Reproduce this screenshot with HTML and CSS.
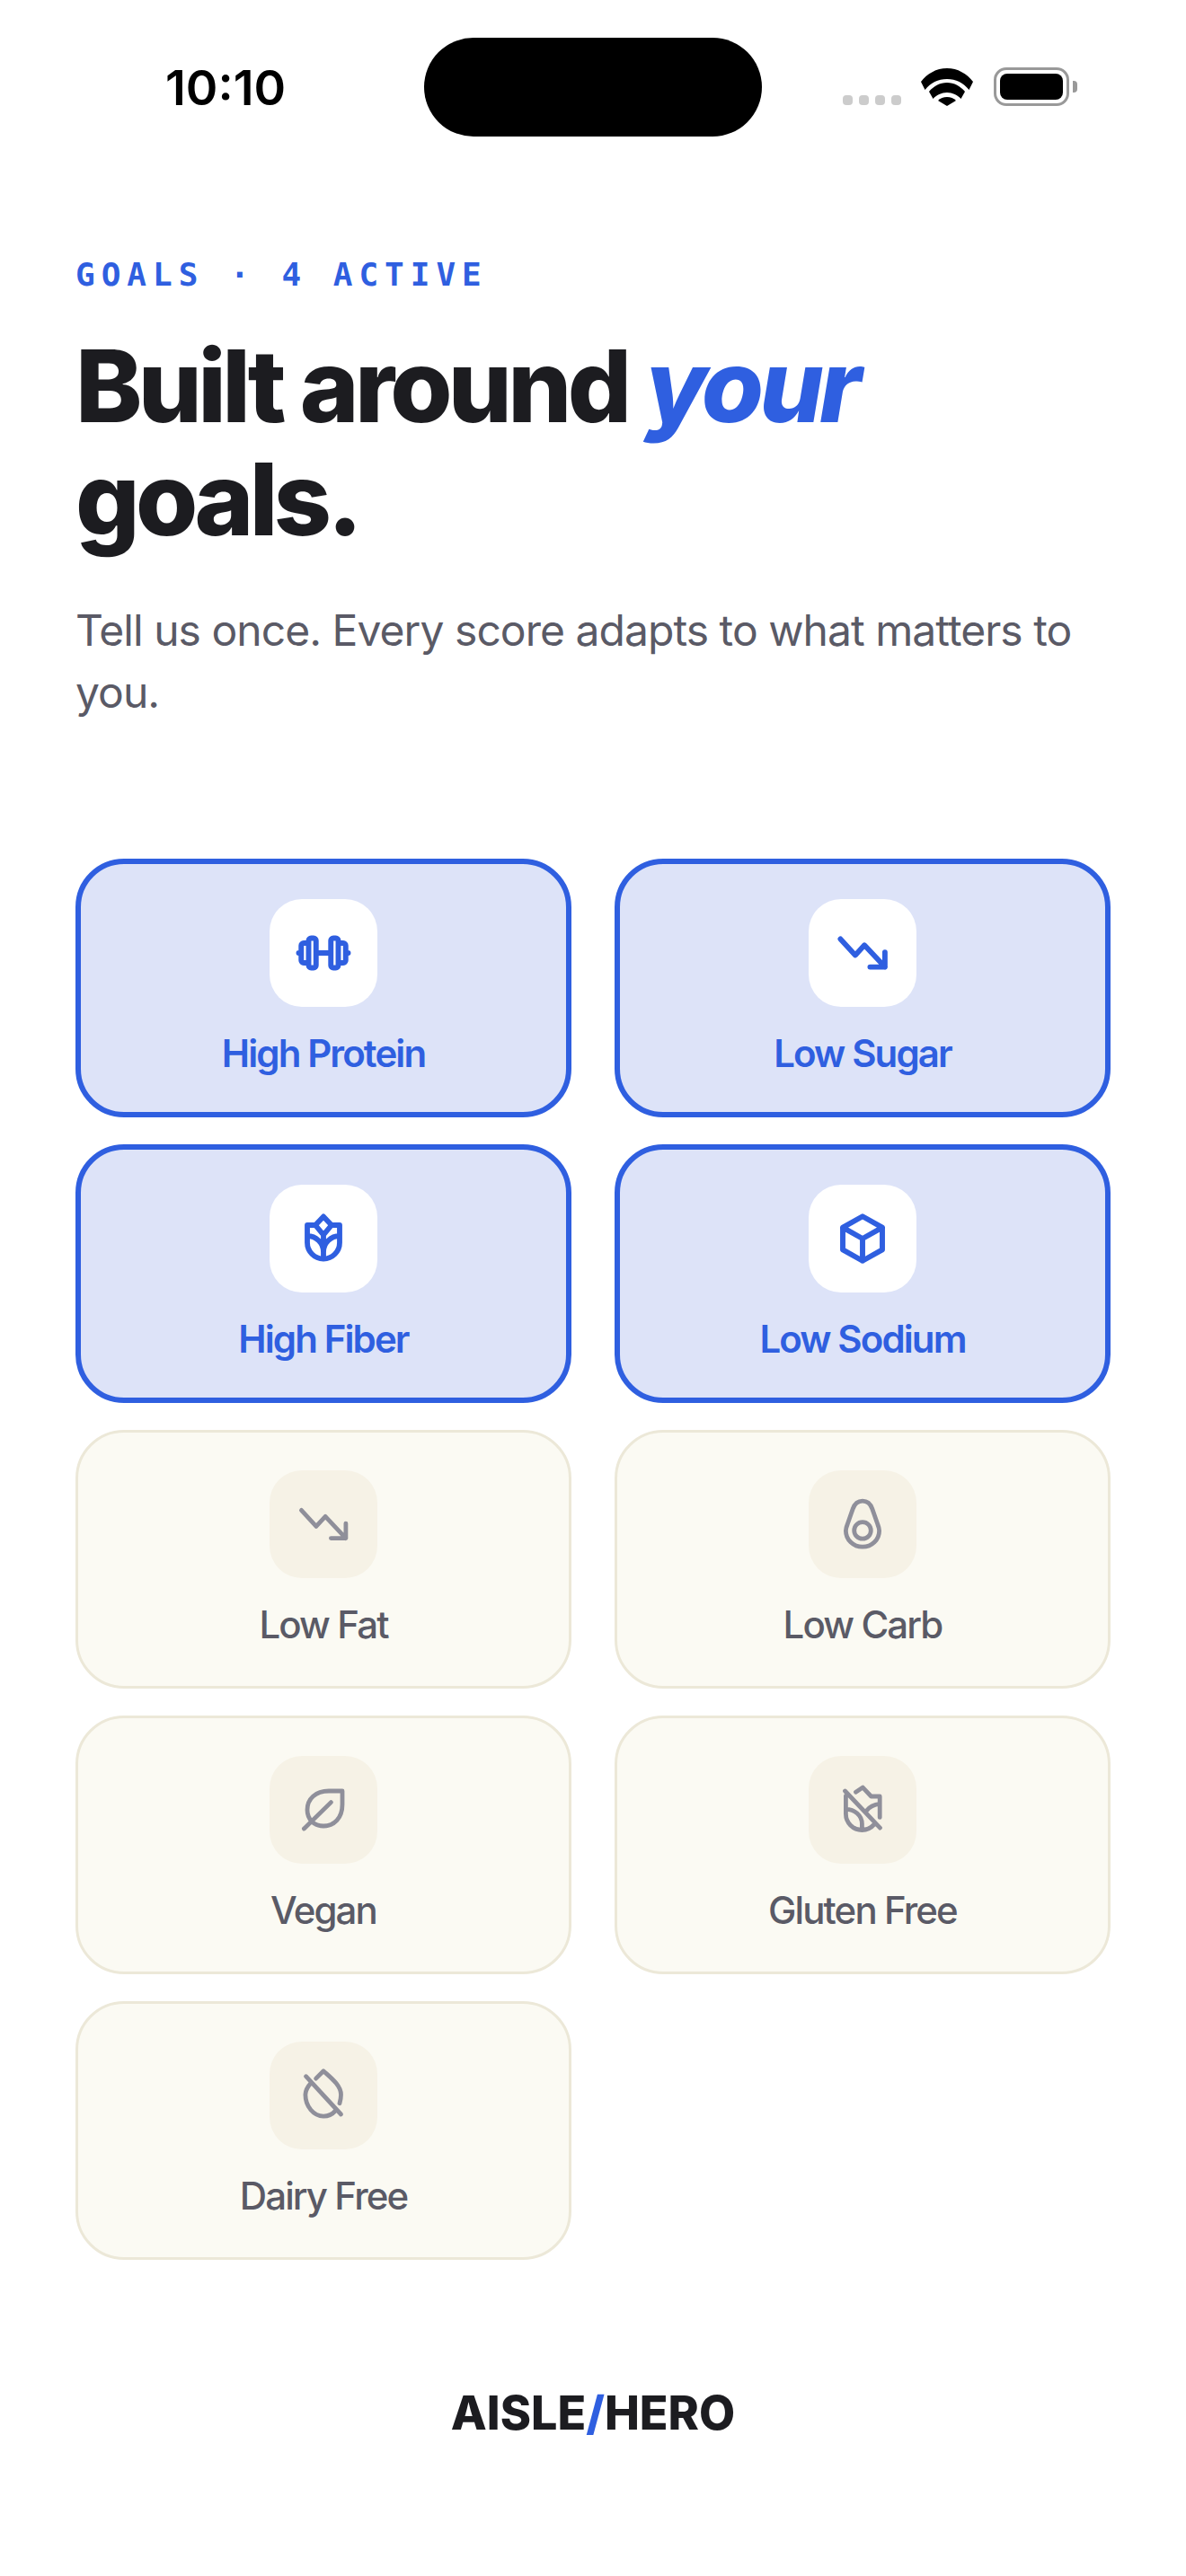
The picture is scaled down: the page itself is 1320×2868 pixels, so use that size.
FILE: index.html
```html
<!DOCTYPE html>
<html lang="en">
<head>
    <meta charset="UTF-8">
    <meta name="viewport" content="width=device-width, initial-scale=1.0">
    <title>Goals</title>
    <link rel="stylesheet" href="styles.css">
</head>
<body>
    <div class="status-bar">
        <span class="clock">10:10</span>
        <div class="island"></div>
        <div class="status-icons">
            <div class="signal"><i></i><i></i><i></i><i></i></div>
            <svg class="wifi" width="58" height="42" viewBox="0 0 58 42">
                <path d="M0 15C7 6 17 0 29 0s22 6 29 15l-4.500 9C47 16 39 12 29 12S11 16 4.500 24Z"/>
                <path d="M9 27C14 21 21 17 29 17s15 4 20 10l-4.500 8C41 31 35 28 29 28s-12 3-15.500 7Z" transform="translate(0 -1)"/>
                <path d="M19 36c2.500-2.500 6-4 10-4s7.500 1.500 10 4L29 42Z"/>
            </svg>
            <div class="battery"><div class="battery-fill"></div></div>
            <div class="battery-cap"></div>
        </div>
    </div>

    <main class="content">
        <div class="eyebrow">GOALS · 4 ACTIVE</div>
        <h1>Built around <em>your</em> goals.</h1>
        <p class="intro">Tell us once. Every score adapts to what matters to you.</p>

        <div class="goal-grid">
            <div class="goal active">
                <div class="goal-icon">
                    <svg viewBox="0 0 24 24"><path d="M2 12h1M6 8h-2a1 1 0 0 0-1 1v6a1 1 0 0 0 1 1h2M6 7v10a1 1 0 0 0 1 1h1a1 1 0 0 0 1-1v-10a1 1 0 0 0-1-1h-1a1 1 0 0 0-1 1M9 12h6M15 7v10a1 1 0 0 0 1 1h1a1 1 0 0 0 1-1v-10a1 1 0 0 0-1-1h-1a1 1 0 0 0-1 1M18 8h2a1 1 0 0 1 1 1v6a1 1 0 0 1-1 1h-2M22 12h-1"/></svg>
                </div>
                <span class="goal-label">High Protein</span>
            </div>
            <div class="goal active">
                <div class="goal-icon">
                    <svg class="fine" viewBox="1 1 22 22"><path d="M3.800 6.800L9.300 12.800L12.700 9.100L20.300 17.200M20.300 11.700V17.200H14.800"/></svg>
                </div>
                <span class="goal-label">Low Sugar</span>
            </div>
            <div class="goal active">
                <div class="goal-icon">
                    <svg class="fine" viewBox="1 1 22 22"><path d="M6 7h3l3-3.200l3 3.200h3v6.500a6 6 0 0 1-6 6a6 6 0 0 1-6-6ZM9 7l3 3.600l3-3.600M12 10.600v8.900M6 11c3.300 0 6 2.700 6 6M18 11c-3.300 0-6 2.700-6 6"/></svg>
                </div>
                <span class="goal-label">High Fiber</span>
            </div>
            <div class="goal active">
                <div class="goal-icon">
                    <svg viewBox="0 0 24 24"><path d="M12 3l8 4.500v9l-8 4.500l-8-4.500v-9ZM12 12l8-4.500M12 12v9M12 12l-8-4.500"/></svg>
                </div>
                <span class="goal-label">Low Sodium</span>
            </div>
            <div class="goal">
                <div class="goal-icon">
                    <svg viewBox="1 1 22 22"><path d="M3.800 6.800L9.300 12.800L12.700 9.100L20.300 17.200M20.300 11.700V17.200H14.800"/></svg>
                </div>
                <span class="goal-label">Low Fat</span>
            </div>
            <div class="goal">
                <div class="goal-icon">
                    <svg viewBox="1 1 22 22"><path d="M12 3.400c-1.900 0-3 1.200-3.600 2.900l-2 5.700c-.4 1-.6 1.700-.6 2.400c0 3.400 2.800 6 6.200 6s6.200-2.600 6.200-6c0-.7-.2-1.400-.6-2.400l-2-5.700c-.6-1.700-1.700-2.900-3.600-2.900Z"/><circle cx="12" cy="14.300" r="3.100"/></svg>
                </div>
                <span class="goal-label">Low Carb</span>
            </div>
            <div class="goal">
                <div class="goal-icon">
                    <svg viewBox="1 1 22 22"><path d="M19 5h-5c-5 0-8 3-8 7c0 3.500 2.500 6 6 6c4 0 7-3 7-8ZM4.800 19L14.800 9.200"/></svg>
                </div>
                <span class="goal-label">Vegan</span>
            </div>
            <div class="goal">
                <div class="goal-icon">
                    <svg viewBox="1 1 22 22"><path d="M5.500 5l13 13.700M5.800 6.800v6.700a6 6 0 0 0 6 6c2 0 3.500-.9 4.600-2.200M18.400 14.800V7h-3.200L12.100 3.700L9.500 5.400M18.400 9.800c-2 .2-3.800 1-5 2.600M5.800 11.800c3.300 0 6 2.300 6 5.400v2.300"/></svg>
                </div>
                <span class="goal-label">Gluten Free</span>
            </div>
            <div class="goal">
                <div class="goal-icon">
                    <svg viewBox="1 1 22 22"><path d="M5.500 4.900L18.500 19M9.200 5.700L12 2.900c2.500 2.300 6.500 5.300 6.500 8.800c0 1.100-.2 2.200-.5 3.200M7.500 7.200c-1.200 1.300-2.200 2.700-2.200 4.500c0 4.400 3.100 8 6.700 8c1.700 0 3.300-.7 4.400-2"/></svg>
                </div>
                <span class="goal-label">Dairy Free</span>
            </div>
        </div>

        <div class="logo">AISLE<span>/</span>HERO</div>
    </main>
</body>
</html>
```

FILE: styles.css
```css
:root {
    --blue: #2f5fe0;
    --ink: #1c1c20;
    --muted: #5a5a66;
}

body {
    margin: 0;
    width: 1320px;
    height: 2868px;
    overflow: hidden;
    background-color: #ffffff;
    color: var(--ink);
    font-family: Inter, sans-serif;
}

/* Status bar */
.status-bar {
    display: flex;
    align-items: flex-start;
    height: 152px;
    padding-top: 42px;
    box-sizing: border-box;
}

.clock {
    width: 472px;
    padding: 31px 0 0 184px;
    box-sizing: border-box;
    font-size: 54px;
    line-height: 50px;
    font-weight: 600;
    letter-spacing: 0;
    color: #000000;
}

.island {
    width: 376px;
    height: 110px;
    border-radius: 55px;
    background-color: #000000;
}

.status-icons {
    display: flex;
    align-items: flex-end;
    margin: 33px 0 0 90px;
    height: 43px;
}

.signal {
    display: flex;
    gap: 7.500px;
    margin-bottom: 1px;
}

.signal i {
    display: block;
    width: 10.500px;
    height: 11px;
    border-radius: 4px;
    background-color: #cccccc;
}

.wifi {
    margin-left: 22px;
    fill: #000000;
}

.battery {
    width: 84px;
    height: 43px;
    margin-left: 23px;
    padding: 4px;
    box-sizing: border-box;
    border: 3px solid #999999;
    border-radius: 14px;
    background-color: #ffffff;
}

.battery-fill {
    width: 100%;
    height: 100%;
    border-radius: 8px;
    background-color: #000000;
}

.battery-cap {
    width: 5px;
    height: 13px;
    margin: 0 0 15px 4px;
    border-radius: 0 4px 4px 0;
    background-color: #999999;
}

/* Main content */
.content {
    padding: 134px 84px 0;
}

.eyebrow {
    font-family: "DejaVu Sans Mono", monospace;
    font-size: 36px;
    line-height: 40px;
    font-weight: 700;
    letter-spacing: 7px;
    color: var(--blue);
}

h1 {
    margin: 40px 0 0;
    width: 1040px;
    font-size: 112px;
    line-height: 126px;
    font-weight: 800;
    letter-spacing: -4.700px;
    color: var(--ink);
}

h1 em {
    font-style: italic;
    color: var(--blue);
}

.intro {
    margin: 49px 0 0;
    font-size: 48px;
    line-height: 69px;
    letter-spacing: -0.960px;
    color: var(--muted);
}

/* Goal cards */
.goal-grid {
    display: grid;
    grid-template-columns: repeat(2, 1fr);
    gap: 30px 48px;
    margin-top: 151px;
}

.goal {
    display: flex;
    flex-direction: column;
    align-items: center;
    height: 288px;
    padding-top: 42px;
    box-sizing: border-box;
    border: 3px solid #ece8d8;
    border-radius: 54px;
    background-color: #fbfaf3;
}

.goal-icon {
    display: flex;
    align-items: center;
    justify-content: center;
    width: 120px;
    height: 120px;
    border-radius: 36px;
    background-color: #f6f2e6;
}

.goal-icon svg {
    width: 66px;
    height: 66px;
    fill: none;
    stroke: #8f8f9a;
    stroke-width: 1.600;
    stroke-linecap: round;
    stroke-linejoin: round;
}

.goal-label {
    margin-top: 27px;
    font-size: 42px;
    line-height: 50px;
    font-weight: 500;
    letter-spacing: -1.900px;
    color: var(--muted);
}

.goal.active {
    padding-top: 39px;
    border: 6px solid var(--blue);
    background-color: #dde3f8;
}

.goal.active .goal-icon {
    background-color: #ffffff;
}

.goal.active .goal-icon svg {
    stroke: var(--blue);
    stroke-width: 2.150;
}

.goal.active .goal-icon svg.fine {
    stroke-width: 1.950;
}

.goal.active .goal-label {
    font-weight: 600;
    color: var(--blue);
}

/* Logo */
.logo {
    margin-top: 141px;
    text-align: center;
    font-size: 52px;
    line-height: 60px;
    font-weight: 800;
    color: var(--ink);
}

.logo span {
    color: var(--blue);
}
```
